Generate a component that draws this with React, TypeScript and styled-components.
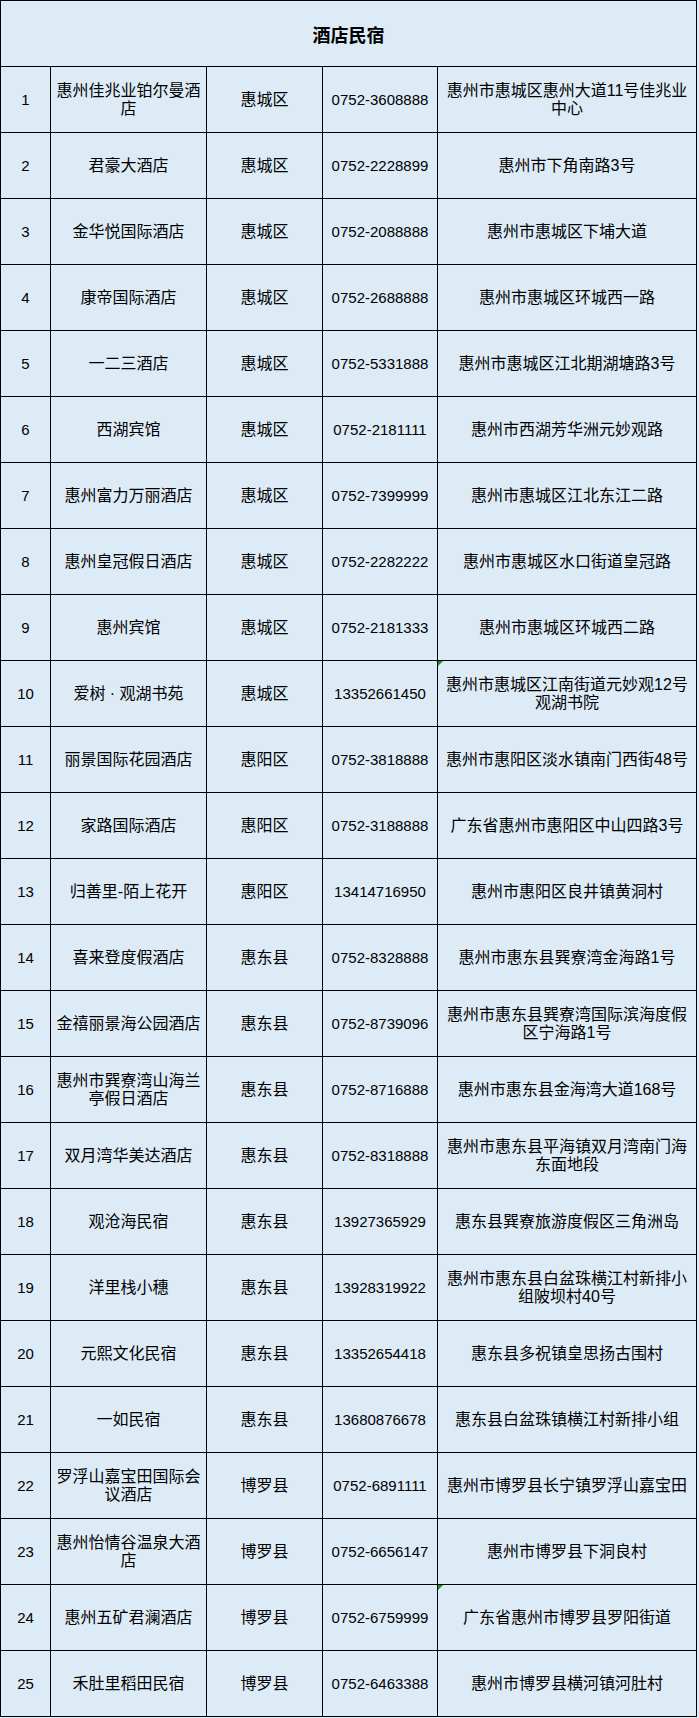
import React from "react";
import styled, { createGlobalStyle } from "styled-components";

const CELL_BG = "#ddebf7";
const LINE = "#000000";

type Hotel = {
  name: string;
  district: string;
  phone: string;
  address: string;
  flagged?: boolean;
};

const HOTELS: Hotel[] = [
  { name: "惠州佳兆业铂尔曼酒店", district: "惠城区", phone: "0752-3608888", address: "惠州市惠城区惠州大道11号佳兆业中心" },
  { name: "君豪大酒店", district: "惠城区", phone: "0752-2228899", address: "惠州市下角南路3号" },
  { name: "金华悦国际酒店", district: "惠城区", phone: "0752-2088888", address: "惠州市惠城区下埔大道" },
  { name: "康帝国际酒店", district: "惠城区", phone: "0752-2688888", address: "惠州市惠城区环城西一路" },
  { name: "一二三酒店", district: "惠城区", phone: "0752-5331888", address: "惠州市惠城区江北期湖塘路3号" },
  { name: "西湖宾馆", district: "惠城区", phone: "0752-2181111", address: "惠州市西湖芳华洲元妙观路" },
  { name: "惠州富力万丽酒店", district: "惠城区", phone: "0752-7399999", address: "惠州市惠城区江北东江二路" },
  { name: "惠州皇冠假日酒店", district: "惠城区", phone: "0752-2282222", address: "惠州市惠城区水口街道皇冠路" },
  { name: "惠州宾馆", district: "惠城区", phone: "0752-2181333", address: "惠州市惠城区环城西二路" },
  { name: "爱树 · 观湖书苑", district: "惠城区", phone: "13352661450", address: "惠州市惠城区江南街道元妙观12号观湖书院", flagged: true },
  { name: "丽景国际花园酒店", district: "惠阳区", phone: "0752-3818888", address: "惠州市惠阳区淡水镇南门西街48号" },
  { name: "家路国际酒店", district: "惠阳区", phone: "0752-3188888", address: "广东省惠州市惠阳区中山四路3号" },
  { name: "归善里-陌上花开", district: "惠阳区", phone: "13414716950", address: "惠州市惠阳区良井镇黄洞村" },
  { name: "喜来登度假酒店", district: "惠东县", phone: "0752-8328888", address: "惠州市惠东县巽寮湾金海路1号" },
  { name: "金禧丽景海公园酒店", district: "惠东县", phone: "0752-8739096", address: "惠州市惠东县巽寮湾国际滨海度假区宁海路1号" },
  { name: "惠州市巽寮湾山海兰亭假日酒店", district: "惠东县", phone: "0752-8716888", address: "惠州市惠东县金海湾大道168号" },
  { name: "双月湾华美达酒店", district: "惠东县", phone: "0752-8318888", address: "惠州市惠东县平海镇双月湾南门海东面地段" },
  { name: "观沧海民宿", district: "惠东县", phone: "13927365929", address: "惠东县巽寮旅游度假区三角洲岛" },
  { name: "洋里栈小穗", district: "惠东县", phone: "13928319922", address: "惠州市惠东县白盆珠横江村新排小组陂坝村40号" },
  { name: "元熙文化民宿", district: "惠东县", phone: "13352654418", address: "惠东县多祝镇皇思扬古围村" },
  { name: "一如民宿", district: "惠东县", phone: "13680876678", address: "惠东县白盆珠镇横江村新排小组" },
  { name: "罗浮山嘉宝田国际会议酒店", district: "博罗县", phone: "0752-6891111", address: "惠州市博罗县长宁镇罗浮山嘉宝田" },
  { name: "惠州怡情谷温泉大酒店", district: "博罗县", phone: "0752-6656147", address: "惠州市博罗县下洞良村" },
  { name: "惠州五矿君澜酒店", district: "博罗县", phone: "0752-6759999", address: "广东省惠州市博罗县罗阳街道", flagged: true },
  { name: "禾肚里稻田民宿", district: "博罗县", phone: "0752-6463388", address: "惠州市博罗县横河镇河肚村" },
];

const GlobalStyle = createGlobalStyle`
  html, body {
    margin: 0;
    padding: 0;
    background: ${CELL_BG};
  }
`;

const Sheet = styled.div`
  display: grid;
  grid-template-columns: 49px 155px 115px 114px 258px;
  grid-auto-rows: 65px;
  gap: 1px;
  padding: 1px;
  width: max-content;
  background: ${LINE};
`;

const Title = styled.div`
  grid-column: 1 / -1;
  display: flex;
  align-items: center;
  justify-content: center;
  background: ${CELL_BG};
  color: #000;
  font-family: "Noto Sans CJK SC", sans-serif;
  font-size: 18px;
  font-weight: 700;
`;

const Cell = styled.div<{ $numeric?: boolean; $flagged?: boolean }>`
  position: relative;
  display: flex;
  align-items: center;
  justify-content: center;
  padding: 0 4px;
  background: ${CELL_BG};
  color: #000;
  text-align: center;
  font-family: "Liberation Sans", "Noto Sans CJK SC", sans-serif;
  font-size: ${(p) => (p.$numeric ? "15px" : "16px")};
  line-height: 18px;

  &::before {
    content: "";
    display: ${(p) => (p.$flagged ? "block" : "none")};
    position: absolute;
    top: 0;
    left: 0;
    border-top: 5px solid #1f8b1f;
    border-right: 5px solid transparent;
  }
`;

const App = () => {
  return (
    <>
      <GlobalStyle />
      <Sheet>
        <Title>酒店民宿</Title>
        {HOTELS.map((h, i) => (
          <React.Fragment key={i}>
            <Cell $numeric>{i + 1}</Cell>
            <Cell>{h.name}</Cell>
            <Cell>{h.district}</Cell>
            <Cell $numeric>{h.phone}</Cell>
            <Cell $flagged={h.flagged}>{h.address}</Cell>
          </React.Fragment>
        ))}
      </Sheet>
    </>
  );
};

export default App;
